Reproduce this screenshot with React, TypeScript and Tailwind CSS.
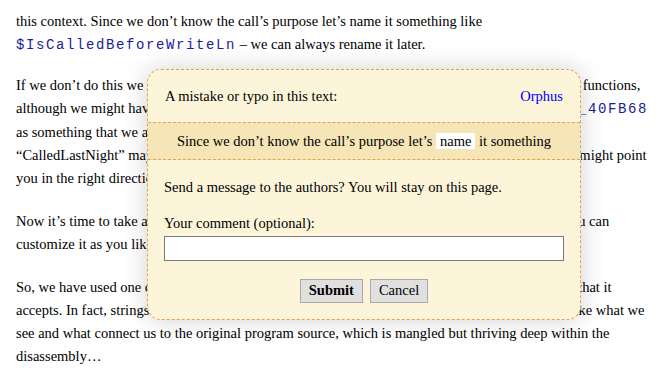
const code = 'font-["Liberation_Mono",monospace] text-[14px] tracking-[1.6px] text-[#1c1c99]';

function ReportPopup() {
  return (
    <div className="absolute left-[147px] top-[69px] w-[434px] rounded-[14px] border border-dashed border-[#e0a455] bg-[#fdf5da] shadow-[0_0_24px_rgba(0,0,0,0.18)]">
      <div className="flex items-center justify-between px-[17px] pt-[16px] pb-[16px] leading-[20px]">
        <span>A mistake or typo in this text:</span>
        <a href="#" className="text-[#0000ff]">Orphus</a>
      </div>
      <div className="border-y border-dashed border-[#e0a455] bg-[#f5e5b7] py-[8px] text-center leading-[20px]">
        Since we don’t know the call’s purpose let’s{' '}
        <span className="bg-white px-[4px]">name</span> it something
      </div>
      <div className="px-[16px] pt-[17px] pb-[16px]">
        <p className="leading-[20px]">Send a message to the authors? You will stay on this page.</p>
        <p className="mt-[16px] leading-[20px]">Your comment (optional):</p>
        <input className="mt-[3px] block h-[25px] w-[400px] border border-[#7a7a7a] bg-white outline-none" />
        <div className="mt-[18px] flex justify-center gap-[7px]">
          <button className="h-[24px] border border-[#a8a8a8] bg-[#e0e0e0] px-[8px] font-bold">Submit</button>
          <button className="h-[24px] border border-[#a8a8a8] bg-[#e0e0e0] px-[8px]">Cancel</button>
        </div>
      </div>
    </div>
  );
}

export default function App() {
  return (
    <div className='relative h-[384px] w-[660px] overflow-hidden bg-white font-["Liberation_Serif",serif] text-[14.5px] text-black'>
      <div className="whitespace-nowrap px-[16px] pt-[10px] leading-[23px]">
        <p>
          this context. Since we don’t know the call’s purpose let’s name it something like
          <br />
          <span className={code}>$IsCalledBeforeWriteLn</span> – we can always rename it later.
        </p>
        <p className="mt-[17px]">
          If we don’t do this we will soon lose track of which is which among all the hundreds of unnamed functions,
          <br />
          although we might have a rough idea of what it does from its strings, we could simply treat <span className={code}>sub_40FB68</span>
          <br />
          as something that we already know quite well.
          <br />
          “CalledLastNight” may sound like a rather silly name, but even a silly name such as this one too might point
          <br />
          you in the right direction later on.
        </p>
        <p className="mt-[20px]">
          Now it’s time to take a closer look at the Strings window inside IDA Pro, a useful tools which you can
          <br />
          customize it as you like.
        </p>
        <p className="mt-[20px]">
          So, we have used one of the strings found inside the binary to understand the exact kind of input that it
          <br />
          accepts. In fact, strings are often the main bridge between all the code we disassemble and also like what we
          <br />
          see and what connect us to the original program source, which is mangled but thriving deep within the
          <br />
          disassembly…
        </p>
      </div>
      <ReportPopup />
    </div>
  );
}
